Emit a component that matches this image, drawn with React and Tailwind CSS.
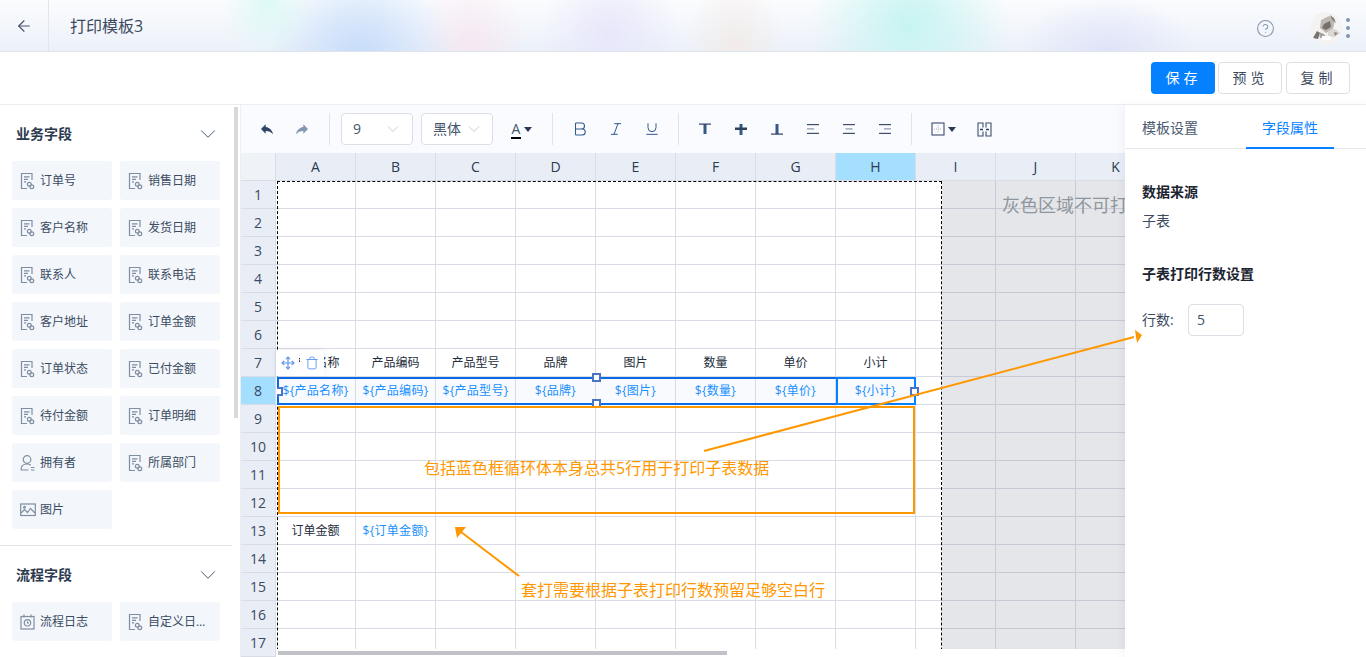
import { ArrowLeft, CircleHelp, Bold, Italic, Underline, ChevronDown, Move, Trash } from 'lucide-react';

const BIZ_FIELDS = [
  { label: '订单号' }, { label: '销售日期' },
  { label: '客户名称' }, { label: '发货日期' },
  { label: '联系人' }, { label: '联系电话' },
  { label: '客户地址' }, { label: '订单金额' },
  { label: '订单状态' }, { label: '已付金额' },
  { label: '待付金额' }, { label: '订单明细' },
  { label: '拥有者', icon: 'user' }, { label: '所属部门' },
  { label: '图片', icon: 'image' },
];

const FLOW_FIELDS = [
  { label: '流程日志', icon: 'log' },
  { label: '自定义日期' },
];

const COLS = ['A', 'B', 'C', 'D', 'E', 'F', 'G', 'H', 'I', 'J', 'K'];
const ROWS = Array.from({ length: 17 }, (_, i) => i + 1);

// cell contents by row, in column order
const CELLS = {
  7: ['产品名称', '产品编码', '产品型号', '品牌', '图片', '数量', '单价', '小计'],
  8: ['${产品名称}', '${产品编码}', '${产品型号}', '${品牌}', '${图片}', '${数量}', '${单价}', '${小计}'],
  13: ['订单金额', '${订单金额}'],
};

function DocIcon() {
  return (
    <svg width="15" height="18" viewBox="0 0 15 18" fill="none" stroke="#7f8ea2" strokeWidth="1.2" className="shrink-0">
      <path d="M7 16.5H1.5V1.5h10.500V8" />
      <path d="M4 4.800h5.500M4 7.300h4M4 9.800h2" />
      <circle cx="9.300" cy="12.300" r="1.900" />
      <circle cx="11.800" cy="14.800" r="1.900" />
    </svg>
  );
}

function UserIcon() {
  return (
    <svg width="15" height="18" viewBox="0 0 15 18" fill="none" stroke="#7f8ea2" strokeWidth="1.2" className="shrink-0">
      <circle cx="7" cy="5.500" r="3.800" />
      <path d="M1 16c0-3.800 2.500-6 6-6 1.500 0 2.800.4 3.800 1.200M1 16h7.500M11 13.500h3.500M11 16h3.500" />
    </svg>
  );
}

function ImageIcon() {
  return (
    <svg width="16" height="14" viewBox="0 0 16 14" fill="none" stroke="#7f8ea2" strokeWidth="1.200" className="shrink-0">
      <rect x="0.700" y="1" width="14.600" height="11.500" />
      <path d="M1 10l3.500-3.500 3 3 3-4 4.500 4.500" />
      <circle cx="4.500" cy="4.200" r="0.900" />
    </svg>
  );
}

function LogIcon() {
  return (
    <svg width="15" height="16" viewBox="0 0 15 16" fill="none" stroke="#7f8ea2" strokeWidth="1.200" className="shrink-0">
      <rect x="1" y="2.500" width="13" height="12.500" />
      <path d="M4 0.500v3M11 0.500v3" />
      <circle cx="7.500" cy="8.800" r="3.200" />
      <path d="M7.500 7.200v1.800h1.500" />
    </svg>
  );
}

function FieldIcon({ type }) {
  if (type === 'user') return <UserIcon />;
  if (type === 'image') return <ImageIcon />;
  if (type === 'log') return <LogIcon />;
  return <DocIcon />;
}

function FieldGrid({ fields }) {
  return (
    <div className="grid grid-cols-[100px_100px] gap-x-2 gap-y-2 pl-3">
      {fields.map((f) => (
        <div key={f.label} className={`h-[39px] flex items-center pl-2 rounded-[3px] bg-[#f3f6fa] text-xs text-[#3b4c63] ${f.icon === 'image' ? 'gap-1' : 'gap-[5px]'}`}>
          <FieldIcon type={f.icon} />
          <span className="w-[58px] pt-px truncate">{f.label}</span>
        </div>
      ))}
    </div>
  );
}

function SectionTitle({ children }) {
  return (
    <div className="h-[28px] flex items-center justify-between pl-4 pr-[19px]">
      <span className="text-sm font-bold text-[#2c3a4f]">{children}</span>
      <ChevronDown size={26} strokeWidth={0.9} className="text-[#3d5676]" />
    </div>
  );
}

function Sep() {
  return <div className="w-px h-8 bg-[#dfe3ea] shrink-0" />;
}

function Caret() {
  return <span className="w-0 h-0 border-x-[4px] border-x-transparent border-t-[5px] border-t-[#2c3a55]" />;
}

function SelectBox({ value, className }) {
  return (
    <div className={`h-8 flex items-center justify-between pl-[11px] border border-[#dcdfe6] rounded-[4px] bg-white text-sm text-[#44546a] ${className}`}>
      <span>{value}</span>
      <ChevronDown size={20} strokeWidth={0.8} className="text-[#aab3c0]" />
    </div>
  );
}

function VAlignIcon({ pos }) {
  const barY = pos === 'top' ? 2 : pos === 'mid' ? 6 : 12;
  const h = pos === 'mid' ? 11 : 10;
  return (
    <svg width="14" height="14" viewBox="0 0 14 14">
      <rect x="5.500" y="2" width="3" height={h} fill="#345a86" />
      <rect x="1" y={barY - 0.5} width="12" height={pos === 'mid' ? 2.500 : 1.200} fill="#2f4060" />
    </svg>
  );
}

function HAlignIcon({ pos }) {
  const x = pos === 'left' ? 1 : pos === 'center' ? 3.500 : 6;
  return (
    <svg width="14" height="14" viewBox="0 0 14 14">
      <rect x="1" y="2" width="12" height="1.200" fill="#3f5068" />
      <rect x={x} y="6.300" width="7" height="1.200" fill="#8a97a8" />
      <rect x="1" y="10.800" width="12" height="1.200" fill="#3f5068" />
    </svg>
  );
}

function EditToolbar() {
  return (
    <div className="h-[48px] shrink-0 flex items-center bg-[#fafbfe] pl-[18px] relative">
      <svg width="16" height="16" viewBox="0 0 24 24" fill="#2f4468"><path d="M10 9V5l-7 7 7 7v-4.100c5 0 8.500 1.600 11 5.100-1-5-4-10-11-11z" /></svg>
      <svg width="16" height="16" viewBox="0 0 24 24" fill="#8497b0" className="ml-[19px]"><path d="M14 9V5l7 7-7 7v-4.100c-5 0-8.500 1.600-11 5.100 1-5 4-10 11-11z" /></svg>
      <div className="ml-[19px]"><Sep /></div>
      <SelectBox value="9" className="w-[72px] ml-[11px] pr-[9px]" />
      <SelectBox value="黑体" className="w-[72px] ml-2 pr-[8px]" />
      <div className="ml-[18px] flex items-center gap-[3px]">
        <span className="text-sm leading-[17px] text-[#44546a] border-b-2 border-black w-[10px] flex justify-center">A</span>
        <Caret />
      </div>
      <div className="ml-[20px]"><Sep /></div>
      <Bold size={18} strokeWidth={1.400} className="ml-[18px] text-[#2f5a8e]" />
      <Italic size={16} strokeWidth={1.500} className="ml-[19px] text-[#2f5a8e]" />
      <Underline size={16} strokeWidth={1.500} className="ml-[20px] text-[#2f5a8e]" />
      <div className="ml-[18px]"><Sep /></div>
      <div className="ml-[19px] flex items-center gap-[22px]">
        <VAlignIcon pos="top" />
        <VAlignIcon pos="mid" />
        <VAlignIcon pos="bottom" />
        <HAlignIcon pos="left" />
        <HAlignIcon pos="center" />
        <HAlignIcon pos="right" />
      </div>
      <div className="ml-[19px]"><Sep /></div>
      <div className="ml-[19px] flex items-center gap-[3px]">
        <svg width="14" height="14" viewBox="0 0 14 14" fill="none">
          <rect x="1" y="1" width="12" height="12" stroke="#3d4a72" strokeWidth="1.100" />
          <path d="M7 3v8M3 7h8" stroke="#b3bac6" strokeWidth="1" strokeDasharray="1 1" />
        </svg>
        <Caret />
      </div>
      <svg width="15" height="15" viewBox="0 0 15 15" fill="none" stroke="#3d4f6d" strokeWidth="1.100" className="ml-[21px]">
        <path d="M6 5.500V1H1v13h5V9.500M9 5.500V1h5v13H9V9.500" />
        <path d="M3 7.500h3M12 7.500H9" strokeWidth="1.600" stroke="#2f4060" />
      </svg>
    </div>
  );
}

function Handle({ className }) {
  return <div className={`absolute w-[9px] h-[9px] bg-white border-2 border-[#4a74c4] ${className}`} />;
}

function Sheet() {
  return (
    <div className="relative flex-1 overflow-hidden">
      <div className="grid grid-cols-[35px_repeat(11,80px)] auto-rows-[28px] w-max">
        <div className="bg-[#eff2f7] border-r border-b border-[#d9dce5]" />
        {COLS.map((c) => (
          <div key={c} className={`flex items-center justify-center text-sm text-[#2a3a50] border-r border-b border-[#d9dce5] ${c === 'H' ? 'bg-[#a4dfff]' : 'bg-[#e9eef6]'}`}>
            {c}
          </div>
        ))}
        {ROWS.map((r) => [
          <div key={`h${r}`} className={`flex items-center justify-center text-sm text-[#3a4a60] border-r border-b border-[#d9dce5] ${r === 8 ? 'bg-[#a4dfff]' : 'bg-[#e9eef6]'}`}>
            {r}
          </div>,
          ...COLS.map((c, i) => {
            const text = CELLS[r]?.[i];
            const isVar = text?.startsWith('$');
            return (
              <div key={c + r} className={`flex items-center justify-center text-xs overflow-hidden whitespace-nowrap border-r border-b border-[#d9dce5] ${isVar ? 'text-[#1890ff] tracking-[0.3px]' : 'text-[#222c3a]'} ${r === 8 && i < 8 ? 'bg-[#f9fafd]' : 'bg-white'}`}>
                {text}
              </div>
            );
          }),
        ])}
      </div>

      {/* grey non-printable part */}
      <div className="absolute left-[701px] top-7 right-0 bottom-0 bg-[#8a8f9a]/[0.22] overflow-hidden">
        <div className="pl-[60px] pt-[10px] text-lg text-[#8f969e] whitespace-nowrap">灰色区域不可打印</div>
      </div>
      {/* print area */}
      <div className="absolute left-[36px] top-7 w-[665px] h-[600px] border border-dashed border-black" />

      {/* selected loop row */}
      <div className="absolute left-[36px] top-[224px] w-[639px] h-[28px] border-2 border-[#0a6ae6]">
        <div className="absolute right-[-2px] top-[-2px] w-[80px] h-[28px] border-2 border-[#0581ff]" />
        <div className="absolute left-[-2px] top-[8px] w-[6px] h-[9px] bg-white border-2 border-l-0 border-[#4a74c4]" />
        <Handle className="left-[313px] top-[-6px]" />
        <Handle className="left-[313px] top-[20px]" />
        <Handle className="right-[-5px] top-[8px]" />
      </div>
      <div className="absolute left-[35px] top-[197px] h-[26px] flex gap-px shadow-[0_0_6px_rgba(80,100,140,0.12)]">
        <div className="w-[23px] flex items-center justify-center bg-white"><Move size={14} className="text-[#5a93ea]" /></div>
        <div className="w-[24px] flex items-center justify-center bg-white"><Trash size={14} strokeWidth={1.500} className="text-[#5a93ea]" /></div>
      </div>

      {/* horizontal scrollbar */}
      <div className="absolute left-[35px] right-0 bottom-0 h-[8px] bg-white">
        <div className="mt-[2px] ml-[2px] w-[449px] h-[4px] bg-[#c0c2c8]" />
      </div>
    </div>
  );
}

function Avatar() {
  return (
    <svg width="32" height="32" viewBox="0 0 32 32">
      <defs><clipPath id="av"><circle cx="16" cy="16" r="16" /></clipPath></defs>
      <g clipPath="url(#av)">
        <rect width="32" height="32" fill="#f4f3f1" />
        <path d="M11 8l8-4 6 4-2 9-7 4-6-5z" fill="#bdb8b3" />
        <path d="M14 12l6-3 1 6-5 3-4-2z" fill="#75706b" />
        <path d="M20 3l4 3 2 5-4-3z" fill="#8c8781" />
        <path d="M3 26l4-7 3 2-2 6z" fill="#77726e" />
        <path d="M9 20l5 2 2 3-6 1z" fill="#a8a39e" />
        <path d="M18 19l7-2 5 4-6 4-6-1z" fill="#dbd7d2" />
        <path d="M24 20l4 1-3 3z" fill="#8c8781" />
        <path d="M12 24l8 0 1 4-9 0z" fill="#ffffff" />
      </g>
    </svg>
  );
}

export default function App() {
  return (
    <div className="relative h-[657px] w-[1366px] overflow-hidden flex flex-col bg-white font-['Open_Sans','Noto_Sans_CJK_SC',sans-serif]">
      <header className="h-[52px] shrink-0 flex items-center border-b border-[#dfe4ec] bg-[radial-gradient(ellipse_45px_55px_at_268px_5px,rgba(214,248,244,0.8),transparent),radial-gradient(ellipse_95px_95px_at_360px_55px,rgba(198,220,250,1),transparent),radial-gradient(ellipse_55px_75px_at_470px_45px,rgba(248,226,238,0.7),transparent),radial-gradient(ellipse_70px_85px_at_610px_35px,rgba(228,226,250,0.75),transparent),radial-gradient(ellipse_50px_75px_at_735px_50px,rgba(242,234,230,0.85),transparent),radial-gradient(ellipse_100px_100px_at_910px_25px,rgba(198,244,241,1),transparent),radial-gradient(ellipse_90px_55px_at_1107px_50px,rgba(222,226,248,0.9),transparent),linear-gradient(to_bottom,#fbfcfe,#ecf1f9)]">
        <div className="w-[49px] h-full flex items-center justify-center border-r border-[#e1e5ee]">
          <ArrowLeft size={18} strokeWidth={1.500} className="text-[#44546a]" />
        </div>
        <div className="ml-[21px] text-base text-[#3c4a5e]">打印模板3</div>
        <div className="ml-auto mt-[5px] flex items-center">
          <CircleHelp size={19} strokeWidth={1.300} className="text-[#8294aa]" />
          <div className="ml-[35px]"><Avatar /></div>
          <div className="ml-[4px] mr-[16px] flex flex-col gap-[4px]">
            <span className="w-[4px] h-[4px] rounded-full bg-[#8294aa]" />
            <span className="w-[4px] h-[4px] rounded-full bg-[#8294aa]" />
            <span className="w-[4px] h-[4px] rounded-full bg-[#8294aa]" />
          </div>
        </div>
      </header>

      <div className="h-[53px] shrink-0 flex items-center justify-end gap-[3px] pr-4 border-b border-[#eceef2]">
        <button className="w-[64px] h-8 pl-px rounded-[4px] bg-[#0581ff] text-sm text-white tracking-[4px]">保存</button>
        <button className="w-[64px] h-8 pl-px rounded-[4px] border border-[#dcdfe6] text-sm text-[#3c4a5e] tracking-[4px]">预览</button>
        <button className="w-[64px] h-8 pl-px ml-px rounded-[4px] border border-[#dcdfe6] text-sm text-[#3c4a5e] tracking-[4px]">复制</button>
      </div>

      <div className="flex-1 flex min-h-0">
        <aside className="relative w-[240px] shrink-0 overflow-hidden pt-[15px]">
          <SectionTitle>业务字段</SectionTitle>
          <div className="mt-[13px]"><FieldGrid fields={BIZ_FIELDS} /></div>
          <div className="mt-4 mr-[8px] border-t border-[#e4e6ea]" />
          <div className="mt-[15px]"><SectionTitle>流程字段</SectionTitle></div>
          <div className="mt-[13px]"><FieldGrid fields={FLOW_FIELDS} /></div>
          <div className="absolute left-[234px] top-[2px] w-[4px] h-[311px] bg-[#d9d9d9]" />
        </aside>

        <main className="flex-1 min-w-0 flex flex-col border-l border-[#eceef2]">
          <EditToolbar />
          <Sheet />
        </main>

        <aside className="relative z-10 w-[241px] shrink-0 bg-white shadow-[-3px_0_8px_rgba(60,80,120,0.06)]">
          <div className="h-[44px] flex border-b border-[#e4e7ed] text-sm">
            <div className="w-[121px] pl-[17px] pt-[13px] text-[#4a5a70]">模板设置</div>
            <div className="w-[88px] pt-[13px] text-center text-[#0581ff] border-b-2 border-[#0581ff] h-[44px]">字段属性</div>
          </div>
          <div className="px-[17px] pt-[33px] text-sm">
            <div className="font-bold text-[#1b2430]">数据来源</div>
            <div className="mt-[9px] text-[#3c4a5e]">子表</div>
            <div className="mt-[33px] font-bold text-[#1b2430]">子表打印行数设置</div>
            <div className="mt-[20px] flex items-center">
              <span className="w-[46px] text-[#3c4a5e]">行数:</span>
              <div className="w-[56px] h-8 pl-2 flex items-center border border-[#dcdfe6] rounded-[4px] text-sm text-[#44546a]">5</div>
            </div>
          </div>
        </aside>
      </div>

      {/* hand-drawn annotations over the whole page */}
      <div className="absolute z-20 left-[278px] top-[406px] w-[637px] h-[108px] border-2 border-[#ff9800]" />
      <div className="absolute z-20 left-[424px] top-[456px] text-base text-[#ff9800] whitespace-nowrap">包括蓝色框循环体本身总共5行用于打印子表数据</div>
      <div className="absolute z-20 left-[521px] top-[578px] text-base text-[#ff9800] whitespace-nowrap">套打需要根据子表打印行数预留足够空白行</div>
      <svg className="absolute z-20 left-0 top-0 pointer-events-none" width="1366" height="657">
        <line x1="704" y1="451" x2="1134" y2="337" stroke="#ff9800" strokeWidth="2" />
        <polygon points="1142,335 1135,330 1137,343" fill="#ff9800" />
        <line x1="519" y1="576" x2="461" y2="532" stroke="#ff9800" strokeWidth="2" />
        <polygon points="455,527 466,527 457,538" fill="#ff9800" />
      </svg>
    </div>
  );
}
